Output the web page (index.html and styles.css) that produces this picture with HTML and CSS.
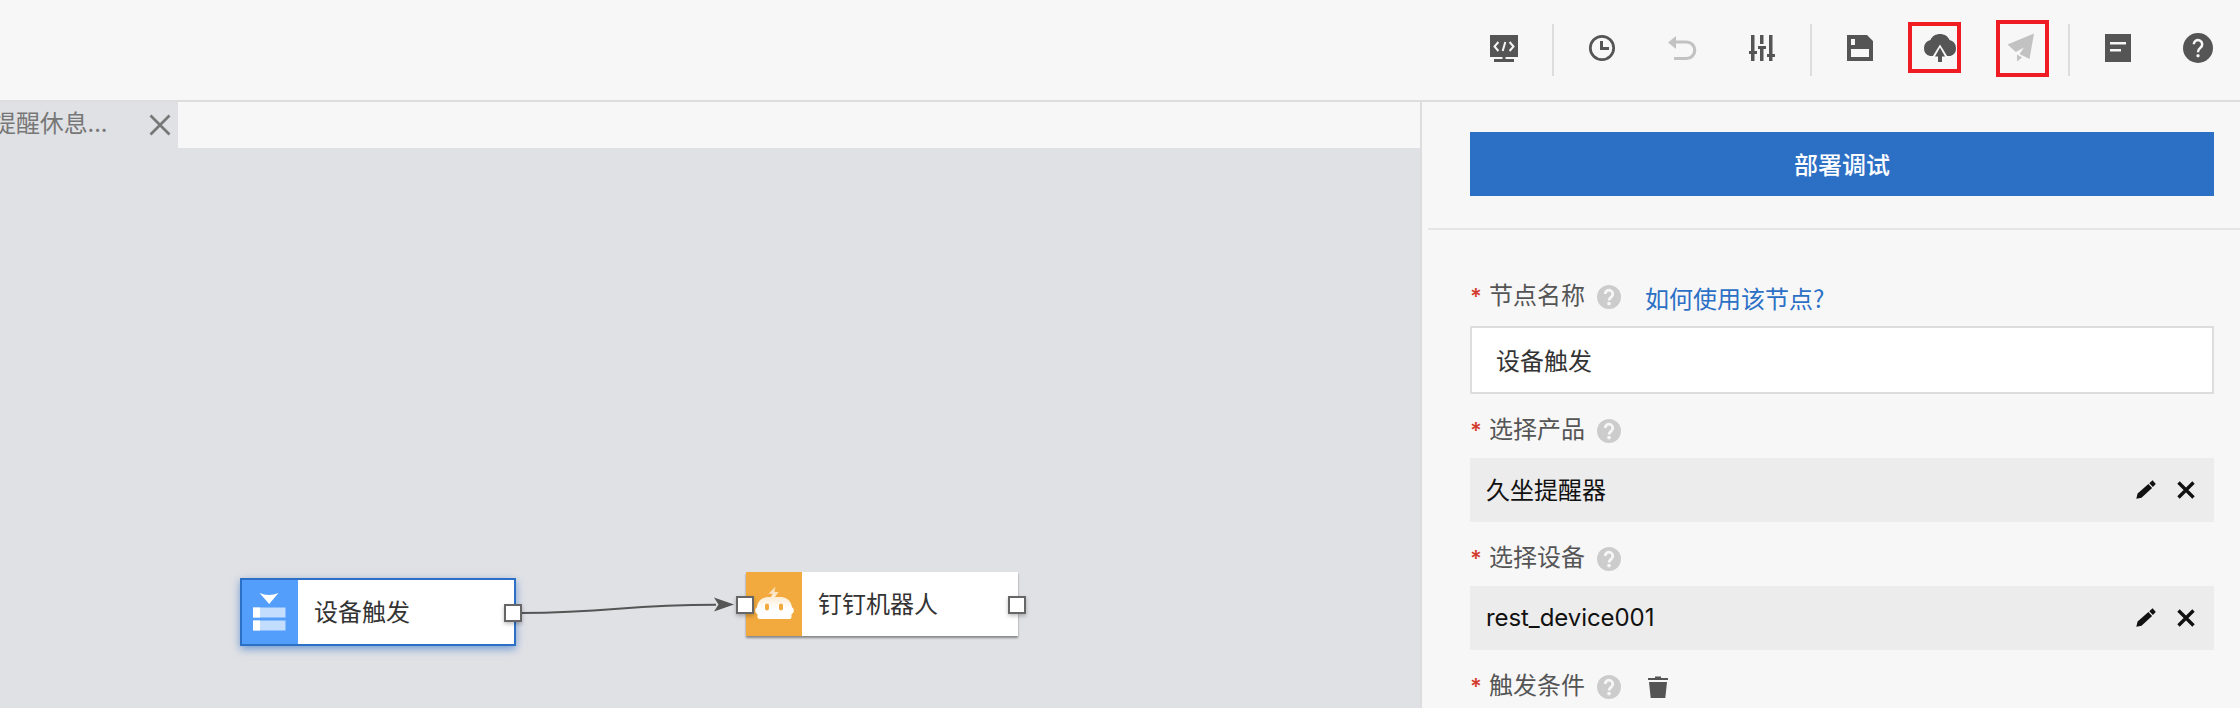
FILE: index.html
```html
<!DOCTYPE html>
<html lang="zh-CN">
<head>
<meta charset="utf-8">
<title>部署调试</title>
<link rel="stylesheet" href="styles.css">
</head>
<body>
<svg class="defs" width="0" height="0">
  <symbol id="help" viewBox="-15 -15 30 30">
    <circle r="15" fill="currentColor"/>
    <path d="M-4.2-3.8a4.2 4.2 0 1 1 6.6 3.5C.8.9 0 1.600 0 4.200" fill="none" stroke="#f7f7f7" stroke-width="2.500"/>
    <rect x="-1.500" y="6.200" width="3" height="3" rx="1" fill="#f7f7f7"/>
  </symbol>
  <symbol id="hint" viewBox="-12 -12 24 24">
    <circle r="12" fill="#ccc"/>
    <path d="M-3.800-3a3.800 3.800 0 1 1 6 3.100C.7 1.200 0 1.700 0 3.500" fill="none" stroke="#f7f7f7" stroke-width="2.800"/>
    <rect x="-1.700" y="5" width="3.400" height="3.200" rx="1" fill="#f7f7f7"/>
  </symbol>
  <symbol id="pencil" viewBox="0 0 20 20">
    <path d="M.3 18.800 1.600 13.500 12.400 4l3.700 4L5.500 17.700z M13.300 3.200 16.600.3 19.800 4.100 16.900 7z" fill="#111"/>
  </symbol>
  <symbol id="cross" viewBox="0 0 18 18">
    <path d="M1.500 1.500l15 15M16.500 1.500l-15 15" stroke="#111" stroke-width="3.400" fill="none"/>
  </symbol>
</svg>

<header class="toolbar">
  <div class="tool"><svg viewBox="-20 -20 40 40">
    <path d="M-14-13h28V9H-14z M-1.500 9h3v2h-3z M-10 11H10v3H-10z"/>
    <path d="M-5.600-6-9.500-1.500-5.600 3M5.600-6 9.500-1.500 5.600 3M1.300-6-1.300 3" stroke="#f7f7f7" stroke-width="2" fill="none"/>
  </svg></div>
  <i class="sep"></i>
  <div class="tool"><svg viewBox="-20 -20 40 40">
    <circle r="11.700" fill="none" stroke="currentColor" stroke-width="2.700"/>
    <path d="M-2-7H1v6H7V2H-2z"/>
  </svg></div>
  <div class="tool off"><svg viewBox="-20 -20 40 40">
    <path d="M-14-5.500-6-12v13z"/>
    <path d="M-8-6H4.500a8 8 0 0 1 0 16.500H-8" fill="none" stroke="currentColor" stroke-width="3.200"/>
  </svg></div>
  <div class="tool"><svg viewBox="-20 -20 40 40">
    <path d="M-11-13h3.500v26H-11z M-13 3h8v3h-8z M-2-13H1.500v9H-2z M-4-2H4v3H-4z M-2 0H1.500v13H-2z M7-13h3.500v26H7z M5 6h8v3H5z"/>
  </svg></div>
  <i class="sep"></i>
  <div class="tool"><svg viewBox="-20 -20 40 40">
    <path fill-rule="evenodd" d="M-13-13H7l6 6v20h-26z M-9-9v6h4v-6z M-9 1v8H9V1z"/>
  </svg></div>
  <div class="tool mark upload"><svg viewBox="-20 -20 40 40">
    <path d="M-16 0a8 8 0 0 1 6.500-8C-8-12-4-14 0-14s8 2 9.500 6A8 8 0 0 1 16 0a8 8 0 0 1-5.500 8H-10A8 8 0 0 1-16 0z"/>
    <path d="M-9 11 0-3.500 9 11z" fill="#f7f7f7"/>
    <path d="M0-.5 5 8.500H2V14h-4V8.500h-3z"/>
  </svg></div>
  <div class="tool mark publish off"><svg viewBox="-20 -20 40 40">
    <path d="M14-14.500 9.500 11-.5 6 4-.5-4.200 4-12.500-3.500z M-3 6.500 2 9.500-3 13.500z"/>
  </svg></div>
  <i class="sep"></i>
  <div class="tool"><svg viewBox="-20 -20 40 40">
    <path d="M-13-14h26v28h-26z"/>
    <path d="M-8-6H8v2.500H-8z M-8 1H3v2.500H-8z" fill="#f7f7f7"/>
  </svg></div>
  <div class="tool"><svg class="round"><use href="#help"/></svg></div>
</header>

<main class="work">
  <section class="editor">
    <div class="tabs">
      <div class="tab">
        <span class="tab-name">提醒休息...</span>
        <svg class="tab-close" viewBox="0 0 22 22"><path d="M1.500 1.500l19 19M20.500 1.500l-19 19" stroke="#777" stroke-width="2.700"/></svg>
      </div>
    </div>
    <div class="canvas">
      <svg class="wire" viewBox="520 590 220 40">
        <path d="M520 613C618 613 618 604.700 716 604.700" fill="none" stroke="#555" stroke-width="2"/>
        <path d="M734 604.500 714 597.500 718.500 604.500 714 611.500z" fill="#555"/>
      </svg>
      <div class="node trigger">
        <div class="node-icon blue"><svg viewBox="0 0 56 64">
          <path d="M17.500 13q9.500 4 19 0L27.200 24z" fill="#fff"/>
          <path d="M11 27.500h32.500v10H11z M11 40.500h32.500v10H11z" fill="#fff" opacity=".65"/>
          <path d="M11 27.500h7v10h-7z M11 40.500h7v10h-7z" fill="#fff"/>
        </svg></div>
        <span class="node-name">设备触发</span>
        <i class="port out"></i>
      </div>
      <div class="node robot">
        <div class="node-icon orange"><svg viewBox="0 0 56 64">
          <defs><linearGradient id="fade" x1="0" y1="14" x2="0" y2="42" gradientUnits="userSpaceOnUse"><stop offset="0" stop-color="#fff" stop-opacity=".55"/><stop offset=".8" stop-color="#fff"/></linearGradient></defs>
          <path fill="url(#fade)" fill-rule="evenodd" d="M29.500 14.500 22.500 21.800h4L25 25h-4c-6 1-9.500 5-10 10.500-2.500.5-2.500 6 .5 6.500v3q0 2 2 2h30q2 0 2-2v-3c3-.5 3-6 .5-6.500C45.500 30 42 26 36 25h-7l3.500-5h-4z M19 33.500a2 2 0 0 1 4 0v3a2 2 0 0 1-4 0z M33 33.500a2 2 0 0 1 4 0v3a2 2 0 0 1-4 0z"/>
        </svg></div>
        <span class="node-name">钉钉机器人</span>
        <i class="port in"></i>
        <i class="port out"></i>
      </div>
    </div>
  </section>

  <aside class="panel">
    <div class="deploy"><button class="deploy-btn">部署调试</button></div>
    <div class="form">
      <div class="label first"><b>*</b><span class="label-text">节点名称</span><svg class="hint"><use href="#hint"/></svg><a class="how">如何使用该节点?</a></div>
      <div class="input">设备触发</div>
      <div class="label"><b>*</b><span class="label-text">选择产品</span><svg class="hint"><use href="#hint"/></svg></div>
      <div class="picked"><span class="value">久坐提醒器</span><svg class="pencil"><use href="#pencil"/></svg><svg class="cross"><use href="#cross"/></svg></div>
      <div class="label"><b>*</b><span class="label-text">选择设备</span><svg class="hint"><use href="#hint"/></svg></div>
      <div class="picked"><span class="value latin">rest_device001</span><svg class="pencil"><use href="#pencil"/></svg><svg class="cross"><use href="#cross"/></svg></div>
      <div class="label"><b>*</b><span class="label-text">触发条件</span><svg class="hint"><use href="#hint"/></svg><svg class="trash" viewBox="0 0 20 22"><path d="M0 2h7V.5h6V2h7v2H0z M1 6h18l-1.700 16H2.700z" fill="#555"/></svg></div>
    </div>
  </aside>
</main>
</body>
</html>
```
FILE: styles.css
```css
*, *::after { box-sizing: border-box; }
body {
  margin: 0;
  height: 708px;
  overflow: hidden;
  background: #f7f7f7;
  color: #333;
  font: 24px/36px "Noto Sans CJK SC", sans-serif;
  display: flex;
  flex-direction: column;
}
svg { display: block; flex: none; }
.defs { position: absolute; }

.toolbar {
  height: 102px;
  flex: none;
  padding: 0 2px 4px 0;
  border-bottom: 2px solid #ddd;
  display: flex;
  justify-content: flex-end;
  align-items: center;
}
.tool {
  width: 80px;
  height: 60px;
  display: flex;
  align-items: center;
  justify-content: center;
  position: relative;
  color: #555;
}
.tool svg { width: 40px; height: 40px; fill: currentColor; }
.tool svg.round { width: 30px; height: 30px; }
.tool.off { color: #c2c2c2; }
.sep { width: 2px; height: 52px; margin: 4px 8px 0; background: #ddd; }
.mark::after {
  content: "";
  position: absolute;
  border: 4px solid #f01c24;
}
.upload::after { left: 8px; top: 4px; width: 53px; height: 51px; }
.publish::after { left: 16px; top: 2px; width: 53px; height: 57px; }

.work { flex: 1; min-height: 0; display: flex; }
.editor {
  width: 1422px;
  flex: none;
  border-right: 2px solid #ddd;
  display: flex;
  flex-direction: column;
}
.tabs { height: 46px; flex: none; display: flex; }
.tab {
  width: 178px;
  background: #e0e1e5;
  color: #777;
  display: flex;
  align-items: center;
  justify-content: space-between;
  padding-right: 7px;
}
.tab-name { margin: -6px 0 0 -8px; letter-spacing: -.1px; }
.tab-close { width: 22px; height: 22px; }
.canvas { flex: 1; position: relative; background: #e0e1e5; overflow: hidden; }

.wire { position: absolute; left: 520px; top: 442px; width: 220px; height: 40px; }
.node {
  position: absolute;
  display: flex;
  align-items: center;
  background: #fff;
}
.trigger {
  left: 240px;
  top: 430px;
  width: 276px;
  height: 68px;
  border: 2px solid #2c70c6;
  box-shadow: 0 3px 8px rgba(44, 112, 198, .6);
}
.robot {
  left: 746px;
  top: 424px;
  width: 272px;
  height: 64px;
  box-shadow: 0 2px 2px rgba(0, 0, 0, .4);
}
.node-icon { width: 56px; height: 64px; }
.blue { background: #549efb; }
.orange { background: #f2a93d; }
.node-name { margin: -3px 0 0 16px; }
.port {
  position: absolute;
  width: 18px;
  height: 18px;
  border: 2px solid #666;
  background: #fff;
  box-shadow: 0 2px 4px rgba(0, 0, 0, .25);
}
.port.in { left: -10px; top: 24px; }
.port.out { right: -8px; top: 24px; }

.panel { flex: 1; padding-left: 6px; }
.deploy { height: 128px; padding: 30px 26px 0 42px; border-bottom: 2px solid #e5e5e5; }
.deploy-btn {
  display: block;
  width: 100%;
  height: 64px;
  border: 0;
  padding: 0;
  background: #2c70c6;
  color: #fff;
  font: 500 24px/64px "Noto Sans CJK SC", sans-serif;
}
.form { padding: 0 26px 0 42px; }
.label { height: 64px; display: flex; align-items: center; padding: 20px 0 10px; color: #555; }
.label.first { height: 96px; padding-top: 48px; }
.label b { width: 19px; margin-top: -2px; color: #d43c2d; font: 600 22px/36px Inter, sans-serif; }
.label-text { margin-top: -7px; }
.hint { width: 24px; height: 24px; margin-left: 12px; }
.how { margin: 1px 0 0 24px; color: #2c70c6; }
.trash { width: 20px; height: 22px; margin-left: 27px; }
.input {
  height: 68px;
  border: 2px solid #ddd;
  background: #fff;
  padding-left: 24px;
  line-height: 64px;
}
.picked {
  height: 64px;
  padding: 0 19px 0 16px;
  background: #ececec;
  color: #111;
  display: flex;
  align-items: center;
}
.value { flex: 1; margin-top: -2px; }
.latin { margin-top: 0; font-family: Inter, "Noto Sans CJK SC", sans-serif; letter-spacing: -.07px; }
.pencil { width: 20px; height: 20px; }
.cross { width: 18px; height: 18px; margin-left: 21px; }
```
